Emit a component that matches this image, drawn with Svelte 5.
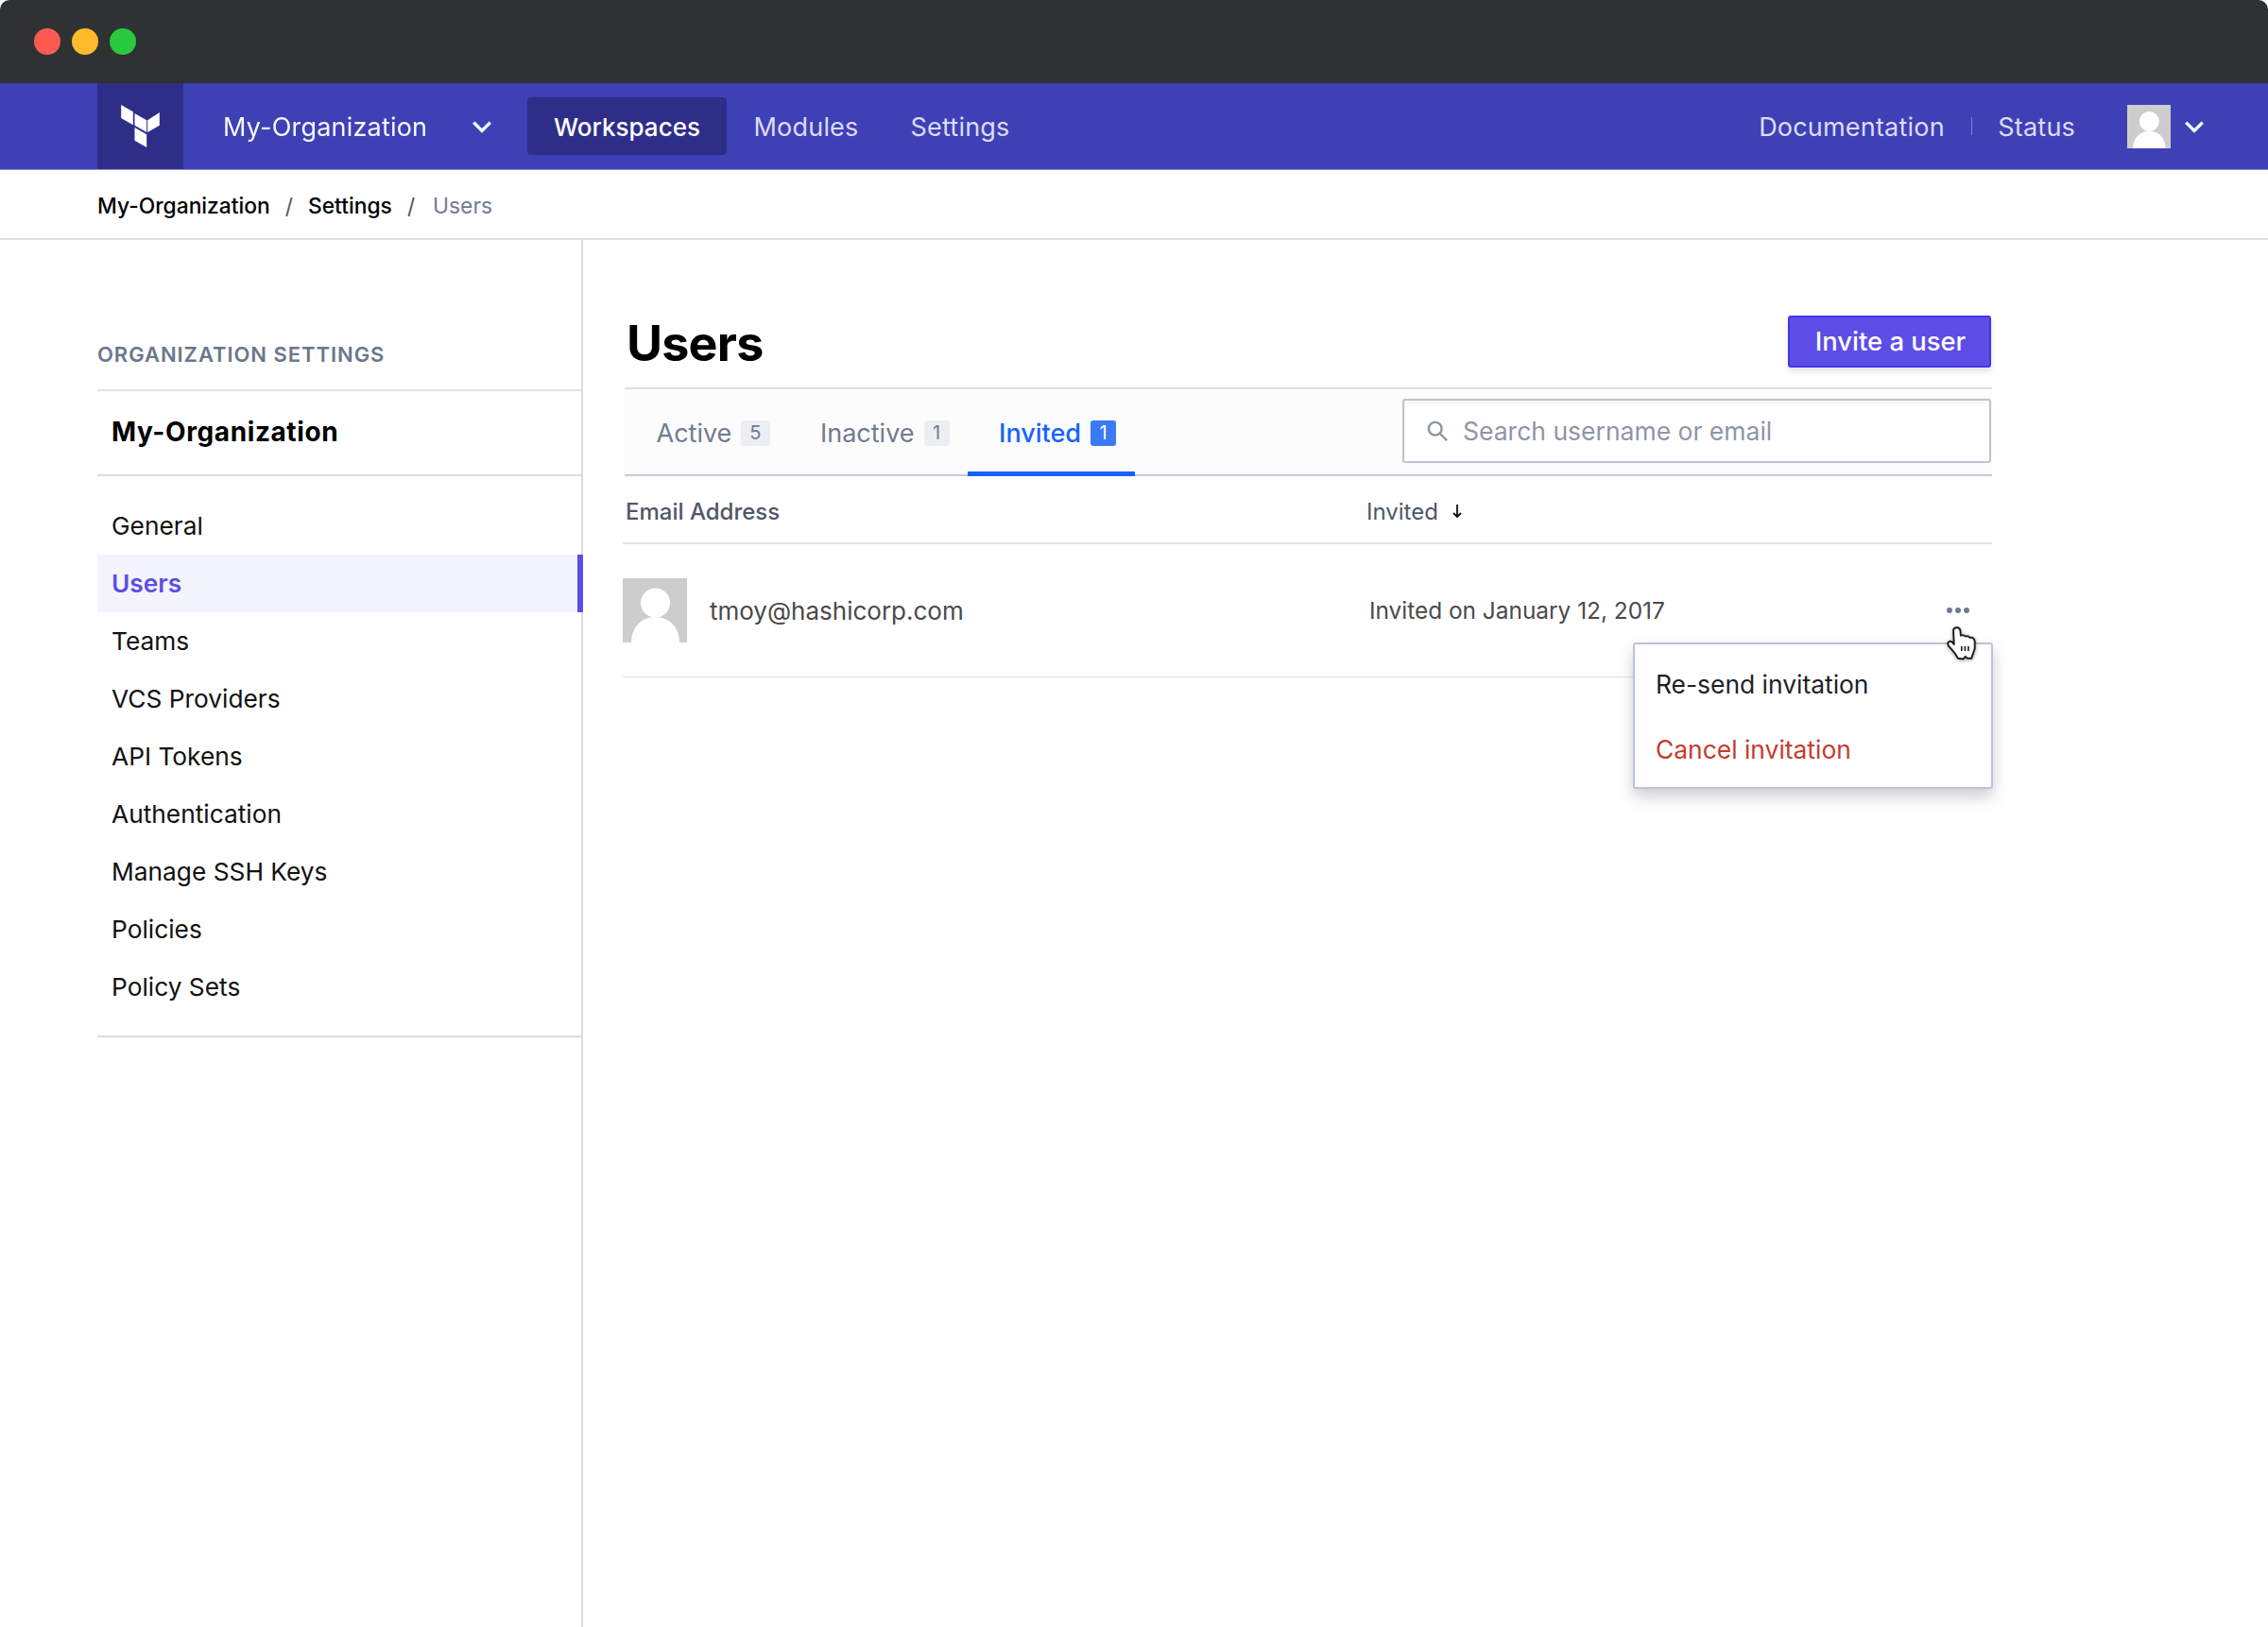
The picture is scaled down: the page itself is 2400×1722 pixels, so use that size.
<script>
  const tabs = [
    { label: 'Active', count: 5 },
    { label: 'Inactive', count: 1 },
    { label: 'Invited', count: 1, active: true }
  ];
  const items = ['General', 'Users', 'Teams', 'VCS Providers', 'API Tokens', 'Authentication', 'Manage SSH Keys', 'Policies', 'Policy Sets'];
</script>

{#snippet chevron()}
  <svg class="chev" viewBox="0 0 24 16" aria-hidden="true"><polyline points="2,3 12,13 22,3" /></svg>
{/snippet}

{#snippet person(cls)}
  <svg class={cls} viewBox="0 0 68 68" aria-hidden="true">
    <rect width="68" height="68" fill="#cdcdcd" />
    <circle cx="34.5" cy="26" r="15.5" fill="#fff" />
    <path d="M9 68 C9 52 20 41 34.5 41 C49 41 60 52 60 68 Z" fill="#fff" />
  </svg>
{/snippet}

<div class="window">
  <header class="titlebar">
    <span class="light red"></span>
    <span class="light yellow"></span>
    <span class="light green"></span>
  </header>

  <nav class="topnav">
    <div class="brand">
      <svg class="logo" viewBox="202 93 122 135" aria-label="Terraform">
        <polygon points="202,93 240,115 240,157 202,135" />
        <polygon points="245,120 283,142 283,180 245,158" />
        <polygon points="286,142 324,117 324,158 286,180" />
        <polygon points="245,165 283,187 283,228 245,206" />
      </svg>
    </div>
    <div class="org">My-Organization</div>
    <div class="org-chev">{@render chevron()}</div>
    <a class="link current" href="#w">Workspaces</a>
    <a class="link" href="#m">Modules</a>
    <a class="link" href="#s">Settings</a>
    <div class="right">
      <a class="link plain" href="#d">Documentation</a>
      <span class="sep"></span>
      <a class="link plain" href="#st">Status</a>
      {@render person('nav-avatar')}
      <div class="user-chev">{@render chevron()}</div>
    </div>
  </nav>

  <div class="crumbs">
    <a href="#o">My-Organization</a><span class="slash">/</span><a href="#s">Settings</a><span class="slash">/</span><span class="here">Users</span>
  </div>

  <div class="body">
    <aside class="sidebar">
      <h3>ORGANIZATION SETTINGS</h3>
      <div class="side-org">My-Organization</div>
      <ul>
        {#each items as item}
          <li class:on={item === 'Users'}>{item}</li>
        {/each}
      </ul>
    </aside>

    <main class="main">
      <div class="head">
        <h1>Users</h1>
        <button class="invite">Invite a user</button>
      </div>

      <div class="tabbar">
        <div class="tabs">
          {#each tabs as t}
            <div class="tab" class:active={t.active}>{t.label}<span class="badge">{t.count}</span></div>
          {/each}
        </div>
        <div class="search">
          <svg viewBox="0 0 24 24" aria-hidden="true"><circle cx="9.5" cy="9.5" r="7.5" /><line x1="15" y1="15" x2="23" y2="23" /></svg>
          <span>Search username or email</span>
        </div>
      </div>

      <div class="table">
        <div class="thead">
          <div class="th-email">Email Address</div>
          <div class="th-inv">Invited<svg viewBox="0 0 12 16" aria-hidden="true"><path d="M6 1 V14 M2 10 L6 14 L10 10" /></svg></div>
        </div>
        <div class="row">
          <div class="who">
            {@render person('row-avatar')}
            <span>tmoy@hashicorp.com</span>
          </div>
          <div class="when">Invited on January 12, 2017</div>
          <div class="dots"><i></i><i></i><i></i></div>
          <div class="menu">
            <div>Re-send invitation</div>
            <div class="danger">Cancel invitation</div>
          </div>
          <svg class="cursor" viewBox="56 128 96 110" aria-hidden="true">
            <path class="hand" d="M78 142 Q78 131 89 131 Q100 131 101 143 L102 157 Q112 154 118 160 Q126 157 132 164 Q146 162 148 176 L148 200 L137 232 L124 232 L117 226 L111 234 L93 232 L82 214 L63 192 Q56 182 64 177 Q72 173 80 186 Z" />
            <path class="fing" d="M105 192 V208 M116 192 V208 M127 192 V208" />
          </svg>
        </div>
      </div>
    </main>
  </div>
</div>

<style>
  :global(body) { margin: 0; background: #fff; }
  .window {
    height: 1722px;
    width: 2400px;
    display: flex;
    flex-direction: column;
    overflow: hidden;
    font-family: Inter, "Liberation Sans", sans-serif;
    color: #000;
    background: #fff;
    border-radius: 10px 10px 0 0;
  }
  .titlebar {
    height: 88px;
    flex: none;
    background: #2e3233;
    display: flex;
    align-items: center;
    gap: 12px;
    padding-left: 36px;
    box-sizing: border-box;
  }
  .light { width: 28px; height: 28px; border-radius: 50%; }
  .red { background: #ff5a52; }
  .yellow { background: #ffbb2c; }
  .green { background: #29c940; }

  .topnav {
    height: 92px;
    flex: none;
    box-sizing: border-box;
    background: #3e40b6;
    border-bottom: 1px solid #8f90e0;
    display: flex;
    align-items: center;
    padding-left: 103px;
    font-size: 27px;
    letter-spacing: 0.2px;
  }
  .brand {
    width: 91px;
    height: 91px;
    background: #2e2e88;
    display: flex;
    align-items: center;
    justify-content: center;
  }
  .logo { width: 41px; height: 45px; fill: #fff; }
  .org { color: #fff; margin-left: 42px; width: 263px; opacity: 0.97; padding-top: 1px; }
  .org-chev { width: 24px; display: flex; }
  .chev { width: 22px; height: 14px; fill: none; stroke: #fff; stroke-width: 4; }
  .link { color: #dcdcf5; text-decoration: none; padding: 1px 27.5px 0; height: 61px; line-height: 61px; border-radius: 4px; box-sizing: border-box; }
  .org-chev + .link { margin-left: 35px; }
  .link.current { background: #2e2e88; color: #fff; font-weight: 500; font-size: 26px; letter-spacing: 0; width: 211px; padding: 1px 0 0; text-align: center; margin-right: 1px; }
  .link.plain { padding: 1px 0 0; }
  .right { margin-left: auto; display: flex; align-items: center; }
  .sep { width: 1px; height: 19px; background: #7d7ed0; margin: 0 27.5px 0 28px; }
  .nav-avatar { width: 46px; height: 46px; margin-left: 55px; display: block; }
  .user-chev { margin: 0 67px 0 14px; display: flex; }

  .crumbs {
    height: 74px;
    flex: none;
    box-sizing: border-box;
    border-bottom: 2px solid #e2e2e2;
    padding: 2px 0 0 103px;
    display: flex;
    align-items: center;
    font-size: 22.8px;
    font-weight: 500;
  }
  .crumbs a { color: #000; text-decoration: none; }
  .slash { color: #555; font-weight: 400; margin: 0 16px; }
  .here { color: #6f7c8f; font-weight: 400; margin-left: 3px; }

  .body { flex: 1; display: flex; min-height: 0; }
  .sidebar {
    width: 617px;
    flex: none;
    box-sizing: border-box;
    border-right: 2px solid #dcdcdc;
    padding-left: 103px;
  }
  .sidebar h3 {
    margin: 0;
    padding: 100px 0 16px;
    font-size: 22px;
    line-height: 42px;
    font-weight: 600;
    color: #6a7789;
    letter-spacing: 0.95px;
    border-bottom: 2px solid #e2e2e2;
  }
  .side-org {
    height: 88px;
    line-height: 87px;
    padding-left: 15px;
    font-size: 28px;
    font-weight: 700;
    letter-spacing: 0.6px;
    border-bottom: 2px solid #dcdcdc;
  }
  .sidebar ul {
    list-style: none;
    margin: 0;
    padding: 22px 0 21px;
    border-bottom: 2px solid #dcdcdc;
  }
  .sidebar li {
    height: 61px;
    line-height: 62px;
    padding-left: 15px;
    font-size: 26.3px;
    color: #111;
  }
  .sidebar li.on {
    background: #f4f4fe;
    color: #5c4ee5;
    font-weight: 600;
    box-shadow: inset -6px 0 0 #5c4ee5;
    margin-right: -2px;
  }

  .main { width: 1491px; box-sizing: border-box; padding: 80px 0 0 44px; }
  .head {
    display: flex;
    justify-content: space-between;
    align-items: center;
    height: 56px;
    padding: 0 1px 20px 2px;
    border-bottom: 2px solid #e0e0e0;
  }
  h1 { margin: 0; padding-top: 4px; font-size: 52px; line-height: 56px; font-weight: 700; letter-spacing: -0.8px; }
  .invite {
    align-self: flex-start;
    width: 215px;
    height: 55px;
    box-sizing: border-box;
    background: #5c4ee5;
    border: 2px solid #4433e6;
    border-radius: 3px;
    color: #fff;
    font: 500 27.4px Inter, sans-serif;
    box-shadow: 0 4px 6px rgba(60, 60, 90, 0.14);
    padding: 0 0 2px 2px;
  }
  .tabbar {
    height: 92px;
    box-sizing: border-box;
    background: #fcfcfd;
    border-bottom: 2px solid #c3cada;
    display: flex;
    justify-content: space-between;
    padding-top: 10px;
    padding-right: 1px;
  }
  .tabs { display: flex; height: 82px; }
  .tab {
    display: flex;
    align-items: center;
    height: 80px;
    padding: 0 21px 8px 33.5px;
    box-sizing: border-box;
    font-size: 27px;
    color: #6f7c8f;
  }
  .tab + .tab { padding-left: 32.5px; }
  .tab.active {
    color: #1563ff;
    font-weight: 500;
    padding: 0 20px 5px 33.5px;
    height: 82px;
    border-bottom: 5px solid #1563ff;
    margin-left: -2px;
  }
  .badge {
    margin-left: 10px;
    min-width: 27px;
    height: 27px;
    padding: 0 9px;
    box-sizing: border-box;
    border-radius: 3px;
    background: #ebeef3;
    color: #6f7c8f;
    font-size: 20px;
    font-weight: 400;
    display: flex;
    align-items: center;
    justify-content: center;
  }
  .active .badge { background: #3c79f6; color: #fff; }
  .search {
    width: 623px;
    height: 68px;
    box-sizing: border-box;
    background: #fff;
    border: 2px solid #bcc3d3;
    border-radius: 3px;
    box-shadow: inset 0 8px 6px -6px rgba(60, 60, 90, 0.08);
    display: flex;
    align-items: center;
    padding-left: 24px;
    font-size: 26.5px;
    color: #8e96a5;
  }
  .search svg { width: 22px; height: 22px; fill: none; stroke: #8e96a5; stroke-width: 2.6; margin-right: 16px; }

  .thead {
    display: grid;
    grid-template-columns: 787px 1fr;
    align-items: center;
    height: 72px;
    padding-top: 4px;
    margin-left: -2px;
    border-bottom: 2px solid #dfe3ea;
    font-size: 24px;
    font-weight: 500;
    color: #4f5766;
    box-sizing: border-box;
  }
  .th-email { padding-left: 3px; }
  .th-inv { display: flex; align-items: center; gap: 14px; font-weight: 400; }
  .th-inv svg { width: 12px; height: 16px; fill: none; stroke: #111; stroke-width: 1.8; }
  .row {
    position: relative;
    display: grid;
    grid-template-columns: 790px 1fr auto;
    align-items: center;
    height: 141px;
    margin-left: -2px;
    border-bottom: 1px solid #d9dde5;
    box-sizing: border-box;
    font-size: 26px;
    color: #4a4a4a;
    padding-right: 24px;
  }
  .who { display: flex; align-items: center; gap: 24px; }
  .row-avatar { width: 68px; height: 68px; display: block; }
  .when { font-size: 24.4px; }
  .dots { display: flex; gap: 3px; }
  .dots i { width: 6px; height: 6px; border-radius: 50%; background: #707a8f; }
  .menu {
    position: absolute;
    top: 104px;
    right: -1px;
    width: 381px;
    height: 155px;
    box-sizing: border-box;
    background: #fff;
    border: 2px solid #bcc3d3;
    border-radius: 3px;
    box-shadow: 0 8px 16px rgba(60, 60, 90, 0.26);
    padding: 8px 22px 6px;
    font-size: 26.4px;
    color: #1c1f24;
    display: grid;
    grid-template-rows: 1fr 1fr;
    align-items: center;
  }
  .danger { color: #c73a2e; }
  .cursor {
    position: absolute;
    top: 87px;
    right: 17px;
    width: 31px;
    height: 36px;
    filter: drop-shadow(0 1px 2px rgba(0, 0, 0, 0.35));
  }
  .hand { fill: #fff; stroke: #1d1d1d; stroke-width: 6; stroke-linejoin: round; }
  .fing { fill: none; stroke: #1d1d1d; stroke-width: 5; }
</style>
